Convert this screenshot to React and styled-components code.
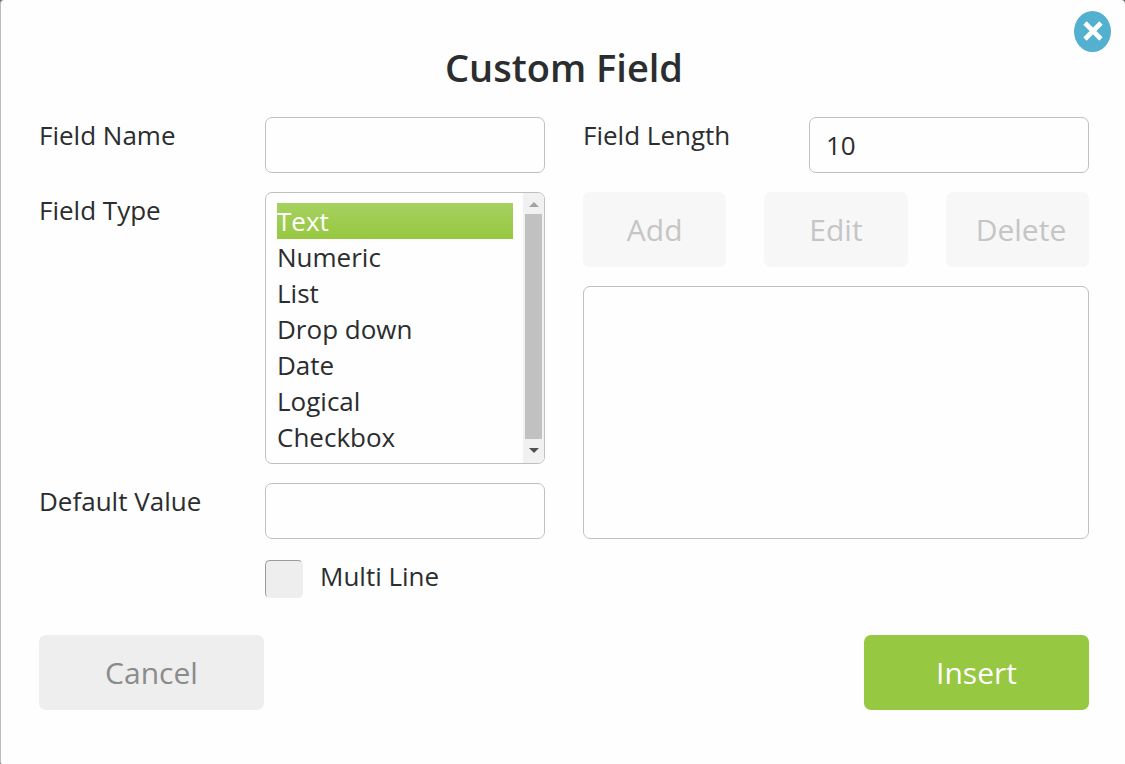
import { useState } from 'react';
import styled, { createGlobalStyle, css } from 'styled-components';

const GlobalStyle = createGlobalStyle`
    * {
        box-sizing: border-box;
    }

    body {
        margin: 0;
        background: #6d6d6d;
    }

    body,
    button,
    input,
    select {
        font-family: 'Open Sans', sans-serif;
        font-size: 26px;
        color: #2b2d2e;
    }
`;

const Dialog = styled.form`
    position: relative;
    min-height: 100vh;
    padding: 41px 36px 54px 38px;

    background: #fefefe;
    border-left: 1px solid #bbb;
    border-radius: 4px 4px 0 2px;
`;

const Title = styled.h1`
    margin: 0 0 24px;

    font-size: 38px;
    font-weight: 600;
    line-height: 52px;
    text-align: center;
`;

const CloseButton = styled.button`
    position: absolute;
    top: 11px;
    right: 14px;

    display: flex;
    align-items: center;
    justify-content: center;

    width: 37px;
    height: 41px;
    padding: 0 0 1px;

    background: #53b1cf;
    border: none;
    border-radius: 50%;
    cursor: pointer;
`;

const Columns = styled.div`
    display: grid;
    grid-template-columns: 1fr 1fr;
    gap: 38px;
`;

const Column = styled.div`
    display: flex;
    flex-direction: column;
    gap: 19px;
`;

const Row = styled.div`
    display: grid;
    grid-template-columns: 226fr 280fr;
`;

const Label = styled.label`
    line-height: 36px;
`;

const boxed = css`
    width: 100%;
    min-width: 0;

    background: #fefefe;
    border: 1px solid #c0c0c0;
    border-radius: 7px;
    outline: none;
`;

const TextInput = styled.input`
    ${boxed}
    height: 56px;
    padding: 0 16px;
`;

const ListFrame = styled.div`
    ${boxed}
    display: flex;
    height: 272px;
    overflow: hidden;
`;

const TypeList = styled.select`
    flex: 1;
    min-width: 0;
    padding: 10px 10px 8px 11px;

    background: transparent;
    border: none;
    outline: none;
    scrollbar-width: none;

    option {
        min-height: 36px;
        padding: 0;
        line-height: 36px;
    }

    option:checked {
        background: linear-gradient(#a6d160, #97c841);
        color: #fff;
        -webkit-text-fill-color: #fff;
    }
`;

const ScrollBar = styled.div`
    display: flex;
    flex-direction: column;
    width: 21px;
    padding: 0 2px 3px;

    background: #f1f1f1;
`;

const ScrollButton = styled.button`
    display: flex;
    align-items: center;
    justify-content: center;

    height: 21px;
    padding: 2px 0 0;

    background: none;
    border: none;
    color: ${({ disabled }) => (disabled ? '#a3a3a3' : '#505050')};
`;

const Thumb = styled.div`
    flex: 1;
    background: #c1c1c1;
`;

const ItemList = styled.select`
    ${boxed}
    flex: 1;
    padding: 10px;
`;

const Button = styled.button`
    height: 75px;
    padding: 0 30px;

    background: #eee;
    border: none;
    border-radius: 7px;

    color: #8b8b8b;
    font-size: 30px;
    cursor: pointer;

    ${({ $primary }) =>
        $primary &&
        css`
            background: #97c841;
            color: #fff;
        `}

    &:disabled {
        background: #f7f7f7;
        color: #c5c5c5;
        cursor: default;
    }
`;

const ListActions = styled.div`
    display: grid;
    grid-template-columns: repeat(3, minmax(0, 1fr));
    gap: 38px;
`;

const CheckRow = styled.div`
    grid-column: 2;

    display: flex;
    align-items: flex-start;
    gap: 17px;
`;

const Checkbox = styled.input`
    appearance: none;
    flex: none;

    width: 38px;
    height: 38px;
    margin: 2px 0 0;

    background: #eee;
    border: 1px solid #eee;
    border-top-color: #9a9a9a;
    border-left-color: #9a9a9a;
    border-radius: 5px;

    &:checked {
        background: #97c841;
    }
`;

const Options = styled.div`
    display: grid;
    grid-template-columns: 1fr 1fr;
    gap: 38px;
    margin: 19px 0 37px;
`;

const Footer = styled.div`
    display: flex;
    justify-content: space-between;

    ${Button} {
        width: 225px;
    }
`;

const fieldTypes = [
    'Text',
    'Numeric',
    'List',
    'Drop down',
    'Date',
    'Logical',
    'Checkbox',
];

const App = () => {
    const [type, setType] = useState('Text');
    const hasItems = type === 'List' || type === 'Drop down';

    const index = fieldTypes.indexOf(type);
    const step = (by) => setType(fieldTypes[index + by]);

    return (
        <>
            <GlobalStyle />
            <Dialog onSubmit={(e) => e.preventDefault()}>
                <CloseButton type="button" aria-label="Close">
                    <svg width="20" height="20" viewBox="0 0 20 20">
                        <path
                            d="M2 2L18 18M18 2L2 18"
                            stroke="#fff"
                            strokeWidth="4.6"
                        />
                    </svg>
                </CloseButton>
                <Title>Custom Field</Title>
                <Columns>
                    <Column>
                        <Row>
                            <Label htmlFor="name">Field Name</Label>
                            <TextInput id="name" />
                        </Row>
                        <Row>
                            <Label htmlFor="type">Field Type</Label>
                            <ListFrame>
                                <TypeList
                                    id="type"
                                    size={7}
                                    value={type}
                                    onChange={(e) => setType(e.target.value)}
                                >
                                    {fieldTypes.map((name) => (
                                        <option key={name}>{name}</option>
                                    ))}
                                </TypeList>
                                <ScrollBar>
                                    <ScrollButton
                                        type="button"
                                        aria-label="Previous type"
                                        disabled={index === 0}
                                        onClick={() => step(-1)}
                                    >
                                        <svg width="10" height="5">
                                            <path
                                                d="M0 5L5 0L10 5Z"
                                                fill="currentColor"
                                            />
                                        </svg>
                                    </ScrollButton>
                                    <Thumb />
                                    <ScrollButton
                                        type="button"
                                        aria-label="Next type"
                                        disabled={
                                            index === fieldTypes.length - 1
                                        }
                                        onClick={() => step(1)}
                                    >
                                        <svg width="10" height="5">
                                            <path
                                                d="M0 0L5 5L10 0Z"
                                                fill="currentColor"
                                            />
                                        </svg>
                                    </ScrollButton>
                                </ScrollBar>
                            </ListFrame>
                        </Row>
                        <Row>
                            <Label htmlFor="default">Default Value</Label>
                            <TextInput id="default" />
                        </Row>
                    </Column>
                    <Column>
                        <Row>
                            <Label htmlFor="length">Field Length</Label>
                            <TextInput id="length" defaultValue="10" />
                        </Row>
                        <ListActions>
                            <Button type="button" disabled={!hasItems}>
                                Add
                            </Button>
                            <Button type="button" disabled={!hasItems}>
                                Edit
                            </Button>
                            <Button type="button" disabled={!hasItems}>
                                Delete
                            </Button>
                        </ListActions>
                        <ItemList size={5} aria-label="List items" />
                    </Column>
                </Columns>
                <Options>
                    <Row>
                        <CheckRow>
                            <Checkbox type="checkbox" id="multiline" />
                            <Label htmlFor="multiline">Multi Line</Label>
                        </CheckRow>
                    </Row>
                </Options>
                <Footer>
                    <Button type="button">Cancel</Button>
                    <Button type="submit" $primary>
                        Insert
                    </Button>
                </Footer>
            </Dialog>
        </>
    );
};

export default App;
